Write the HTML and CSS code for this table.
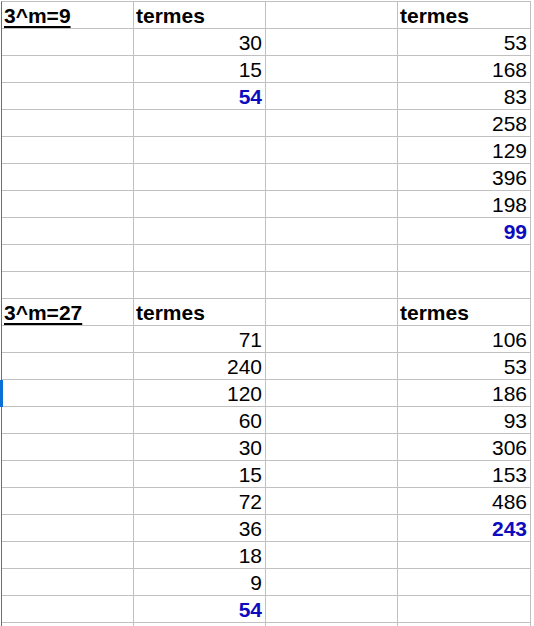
FILE: index.html
```html
<!DOCTYPE html>
<html>
<head>
<meta charset="utf-8">
<link rel="stylesheet" href="styles.css">
</head>
<body>
<div class="sheet">
  <div class="row"><div class="c hd u">3^m=9</div><div class="c hd">termes</div><div class="c"></div><div class="c hd">termes</div></div>
  <div class="row"><div class="c"></div><div class="c n">30</div><div class="c"></div><div class="c n">53</div></div>
  <div class="row"><div class="c"></div><div class="c n">15</div><div class="c"></div><div class="c n">168</div></div>
  <div class="row"><div class="c"></div><div class="c n res">54</div><div class="c"></div><div class="c n">83</div></div>
  <div class="row"><div class="c"></div><div class="c"></div><div class="c"></div><div class="c n">258</div></div>
  <div class="row"><div class="c"></div><div class="c"></div><div class="c"></div><div class="c n">129</div></div>
  <div class="row"><div class="c"></div><div class="c"></div><div class="c"></div><div class="c n">396</div></div>
  <div class="row"><div class="c"></div><div class="c"></div><div class="c"></div><div class="c n">198</div></div>
  <div class="row"><div class="c"></div><div class="c"></div><div class="c"></div><div class="c n res">99</div></div>
  <div class="row"><div class="c"></div><div class="c"></div><div class="c"></div><div class="c"></div></div>
  <div class="row"><div class="c"></div><div class="c"></div><div class="c"></div><div class="c"></div></div>
  <div class="row"><div class="c hd u">3^m=27</div><div class="c hd">termes</div><div class="c"></div><div class="c hd">termes</div></div>
  <div class="row"><div class="c"></div><div class="c n">71</div><div class="c"></div><div class="c n">106</div></div>
  <div class="row"><div class="c"></div><div class="c n">240</div><div class="c"></div><div class="c n">53</div></div>
  <div class="row sel"><div class="c"></div><div class="c n">120</div><div class="c"></div><div class="c n">186</div></div>
  <div class="row"><div class="c"></div><div class="c n">60</div><div class="c"></div><div class="c n">93</div></div>
  <div class="row"><div class="c"></div><div class="c n">30</div><div class="c"></div><div class="c n">306</div></div>
  <div class="row"><div class="c"></div><div class="c n">15</div><div class="c"></div><div class="c n">153</div></div>
  <div class="row"><div class="c"></div><div class="c n">72</div><div class="c"></div><div class="c n">486</div></div>
  <div class="row"><div class="c"></div><div class="c n">36</div><div class="c"></div><div class="c n res">243</div></div>
  <div class="row"><div class="c"></div><div class="c n">18</div><div class="c"></div><div class="c"></div></div>
  <div class="row"><div class="c"></div><div class="c n">9</div><div class="c"></div><div class="c"></div></div>
  <div class="row"><div class="c"></div><div class="c n res">54</div><div class="c"></div><div class="c"></div></div>
  <div class="row"><div class="c"></div><div class="c"></div><div class="c"></div><div class="c"></div></div>
</div>
</body>
</html>
```

FILE: styles.css
```css
html, body {
  margin: 0;
  padding: 0;
  background: #ffffff;
  overflow: hidden;
}
body {
  width: 534px;
  height: 626px;
  font-family: "Liberation Sans", Arial, sans-serif;
  font-size: 21px;
  color: #000000;
}
.sheet {
  margin-left: 1px;
  margin-top: 1px;
  border-left: 1px solid #6e6e6e;
  border-top: 1px solid #c0c0c0;
  width: 529px;
}
.row {
  position: relative;
  display: grid;
  grid-template-columns: 132px 132px 132px 133px;
  height: 27px;
}
.c {
  box-sizing: border-box;
  height: 27px;
  border-right: 1px solid #c0c0c0;
  border-bottom: 1px solid #c0c0c0;
  padding: 1px 3px 0 2px;
  line-height: 25px;
  white-space: nowrap;
  overflow: hidden;
}
.hd {
  font-weight: bold;
}
.u {
  text-decoration: underline;
  text-decoration-thickness: 2px;
  text-underline-offset: 3px;
}
.n {
  text-align: right;
}
.res {
  font-weight: bold;
  color: #0c0cbe;
}
.sel::before {
  content: "";
  position: absolute;
  left: -2px;
  top: 0;
  width: 3px;
  height: 27px;
  background: #0a6fd6;
}
```
